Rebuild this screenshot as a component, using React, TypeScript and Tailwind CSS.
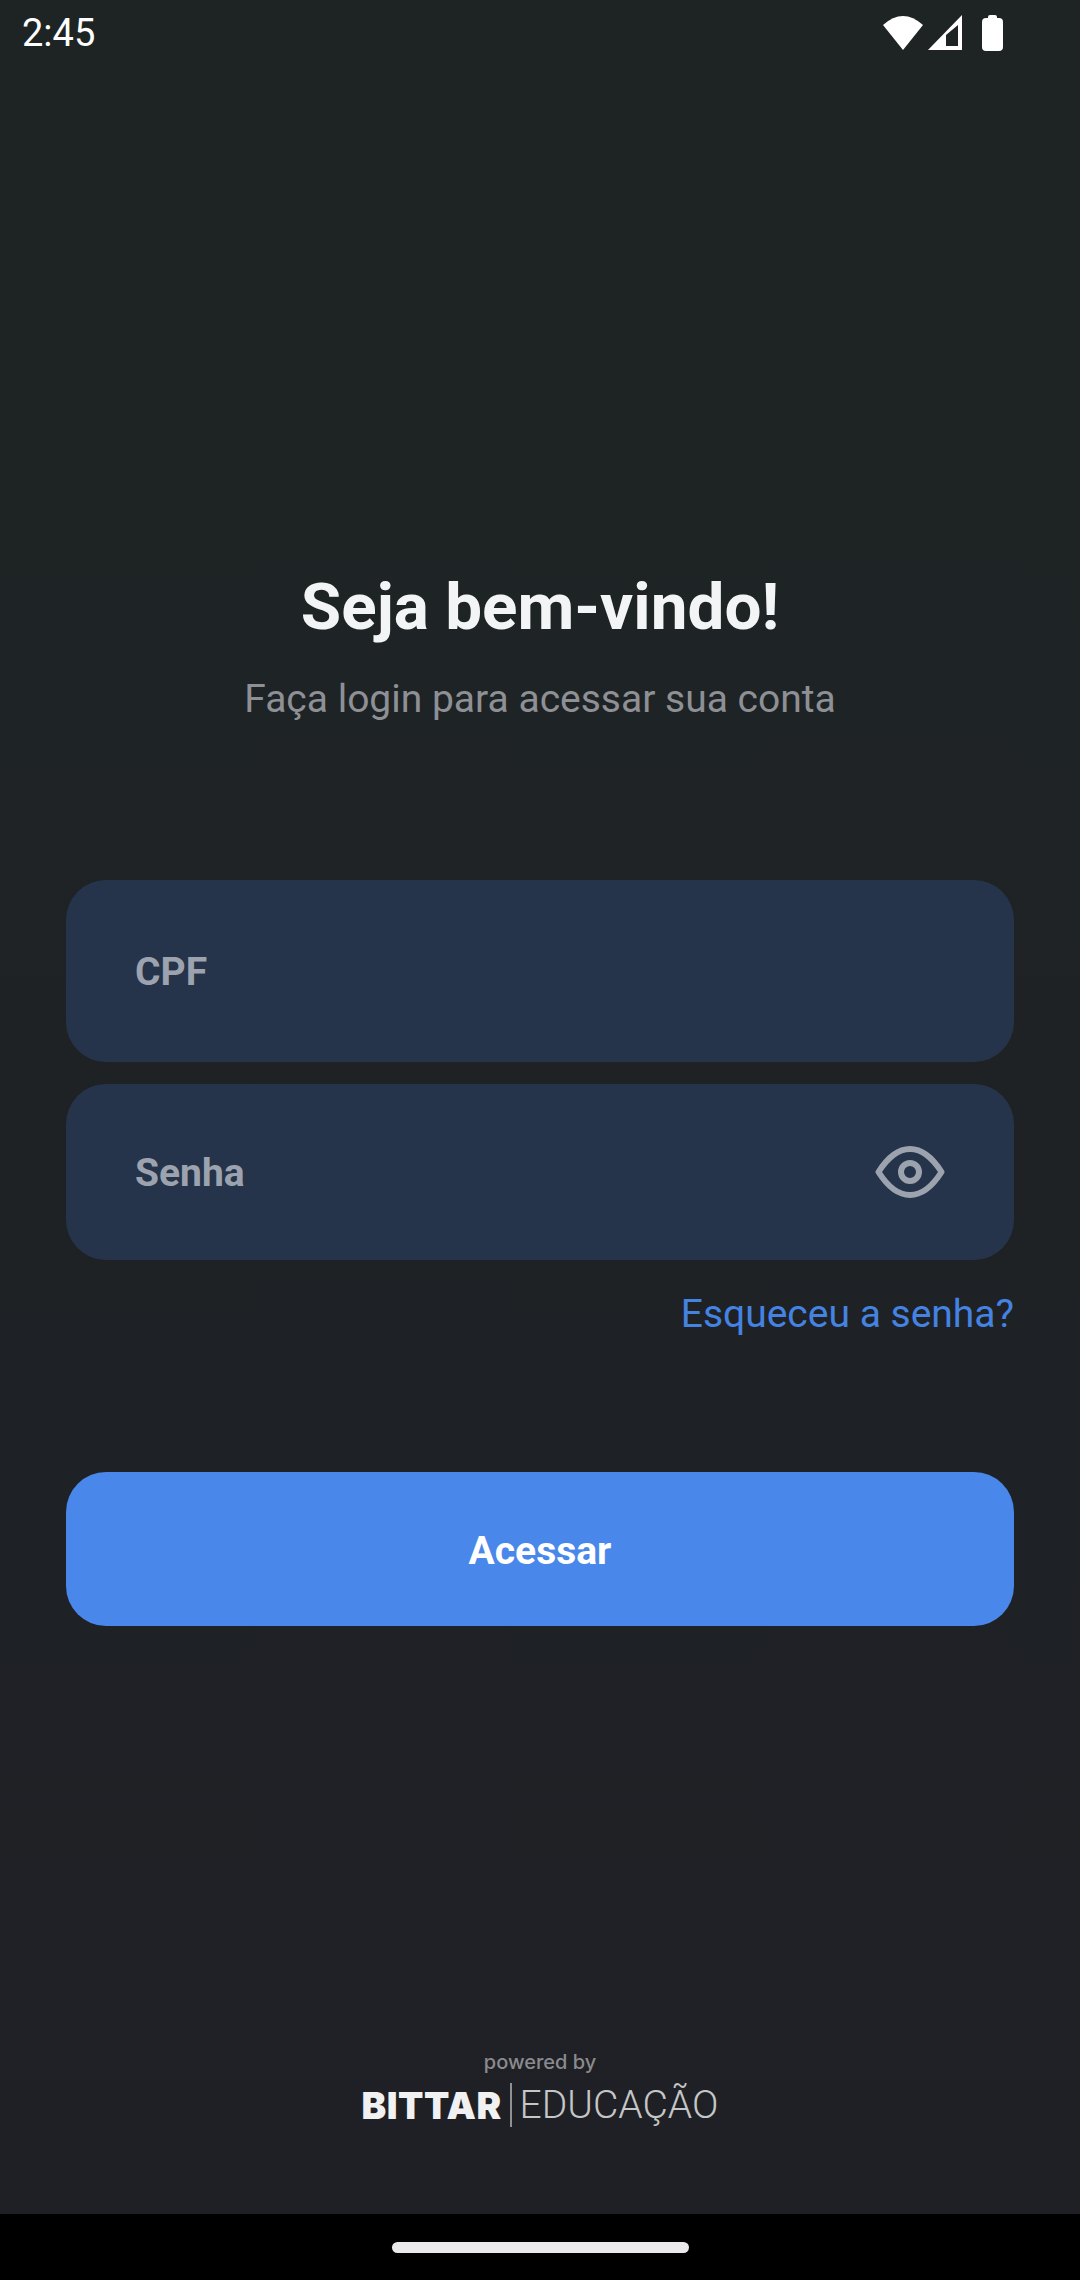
function StatusBar() {
    return (
        <div className="h-[66px] flex items-center justify-between pl-[22px] pr-[74px]">
            <span className="text-[38px] leading-none text-white">2:45</span>
            <svg width="126" height="38" viewBox="0 0 126 38" fill="white">
                <path d="M3 11 Q 23 -7 43 11 L 23 36 Z" />
                <path fillRule="evenodd" d="M48 36 L 82 1 L 82 36 Z M 66 21 L 66 32 L 78 32 L 78 11 Z" />
                <path d="M108 4 L 108 3 Q 108 1 110 1 L 115 1 Q 117 1 117 3 L 117 4 L 119 4 Q 123 4 123 8 L 123 33 Q 123 37 119 37 L 106 37 Q 102 37 102 33 L 102 8 Q 102 4 106 4 Z" />
            </svg>
        </div>
    )
}

function App() {
    return (
        <div className="w-[1080px] h-[2280px] flex flex-col bg-black font-['Roboto',sans-serif] overflow-hidden">
            <div className="h-[2214px] flex flex-col bg-gradient-to-b from-[#1e2424] via-[#1e2225] to-[#1f2025]">
                <StatusBar />

                <div className="flex flex-col items-center pt-[503px]">
                    <h1 className="text-[65.6px] leading-[76px] font-bold text-[#f3f4f6]">Seja bem-vindo!</h1>
                    <p className="mt-[32px] text-[39px] leading-[44px] text-[#8e9095]">Faça login para acessar sua conta</p>
                </div>

                <div className="flex flex-col px-[66px] pt-[159px]">
                    <div className="h-[182px] rounded-[40px] bg-[#25344a] flex items-center px-[69px] pt-[3px]">
                        <span className="text-[39px] font-bold text-[#9ca3af]">CPF</span>
                    </div>
                    <div className="mt-[22px] h-[176px] rounded-[40px] bg-[#25344a] flex items-center justify-between pl-[69px] pr-[69px]">
                        <span className="text-[39px] font-bold text-[#9ca3af] pt-[3px]">Senha</span>
                        <svg width="70" height="52" viewBox="0 0 70 52" fill="none" stroke="#9ca3af" strokeWidth="6">
                            <path d="M3.5 26 C 13 11, 23 3, 35 3 C 47 3, 57 11, 66.5 26 C 57 41, 47 49, 35 49 C 23 49, 13 41, 3.5 26 Z" strokeLinejoin="round" />
                            <circle cx="35" cy="26" r="9" />
                        </svg>
                    </div>
                    <div className="mt-[32px] flex justify-end">
                        <a className="text-[39px] leading-[44px] text-[#4583e2]">Esqueceu a senha?</a>
                    </div>
                    <button className="mt-[136px] h-[154px] rounded-[40px] bg-[#4a87ea] text-white text-[39px] font-bold pt-[5px]">Acessar</button>
                </div>

                <div className="mt-auto flex flex-col items-center pb-[86px]">
                    <span className="text-[20px] leading-[20px] font-medium text-[#8a8b8e] font-['Inter',sans-serif]">powered by</span>
                    <div className="mt-[10px] flex items-center h-[46px]">
                        <span className="text-[37px] leading-none font-black tracking-[0.5px] text-[#f1f1f1] font-['Inter',sans-serif]">BITTAR</span>
                        <div className="w-[2px] h-[44px] bg-[#8f9092] mx-[8px]" />
                        <span className="text-[39px] leading-none font-light text-[#c5c6c8] font-['Roboto',sans-serif]">EDUCAÇÃO</span>
                    </div>
                </div>
            </div>

            <div className="flex-1 flex justify-center pt-[28px]">
                <div className="w-[297px] h-[11px] rounded-full bg-[#ebe9ec]" />
            </div>
        </div>
    )
}

export default App
